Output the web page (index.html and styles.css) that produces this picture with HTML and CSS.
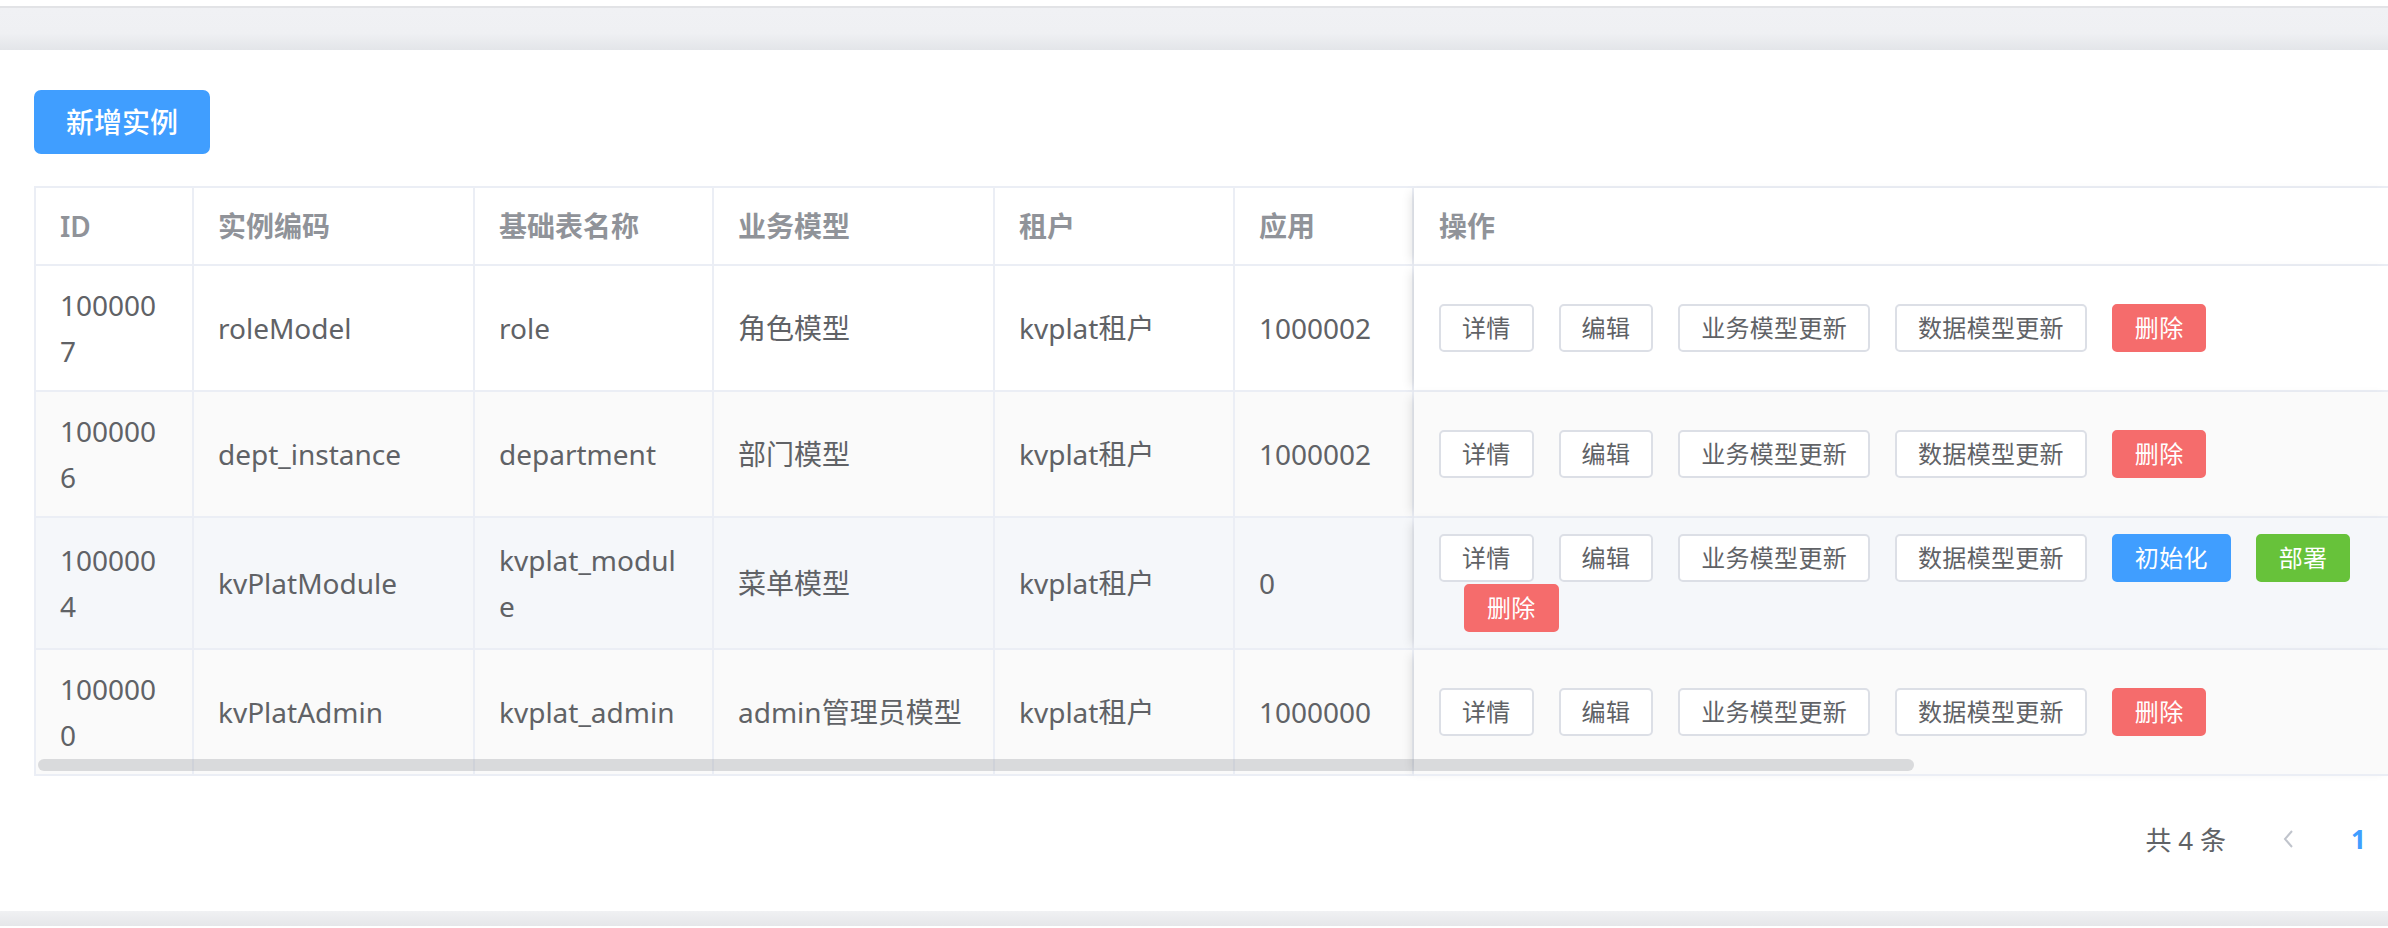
FILE: index.html
```html
<!DOCTYPE html>
<html lang="zh-CN">
<head>
  <meta charset="UTF-8">
  <meta name="viewport" content="width=device-width, initial-scale=1.0">
  <title>实例管理</title>
  <link rel="stylesheet" href="styles.css">
</head>
<body>
  <div class="page">
    <div class="top-band"></div>

    <div class="content">
      <div class="toolbar">
        <button class="btn btn-primary btn-add">新增实例</button>
      </div>

      <div class="table-wrap">
        <table class="data-table">
          <colgroup>
            <col class="c-id">
            <col class="c-code">
            <col class="c-base">
            <col class="c-model">
            <col class="c-tenant">
            <col class="c-app">
            <col>
          </colgroup>
          <thead>
            <tr>
              <th>ID</th>
              <th>实例编码</th>
              <th>基础表名称</th>
              <th>业务模型</th>
              <th>租户</th>
              <th>应用</th>
              <th class="fixed">操作</th>
            </tr>
          </thead>
          <tbody>
            <tr>
              <td>1000007</td>
              <td>roleModel</td>
              <td>role</td>
              <td>角色模型</td>
              <td>kvplat租户</td>
              <td>1000002</td>
              <td class="fixed">
                <div class="ops">
                  <button class="btn btn-mini">详情</button>
                  <button class="btn btn-mini">编辑</button>
                  <button class="btn btn-mini">业务模型更新</button>
                  <button class="btn btn-mini">数据模型更新</button>
                  <button class="btn btn-mini btn-danger">删除</button>
                </div>
              </td>
            </tr>
            <tr class="striped">
              <td>1000006</td>
              <td>dept_instance</td>
              <td>department</td>
              <td>部门模型</td>
              <td>kvplat租户</td>
              <td>1000002</td>
              <td class="fixed">
                <div class="ops">
                  <button class="btn btn-mini">详情</button>
                  <button class="btn btn-mini">编辑</button>
                  <button class="btn btn-mini">业务模型更新</button>
                  <button class="btn btn-mini">数据模型更新</button>
                  <button class="btn btn-mini btn-danger">删除</button>
                </div>
              </td>
            </tr>
            <tr class="hover">
              <td>1000004</td>
              <td>kvPlatModule</td>
              <td>kvplat_module</td>
              <td>菜单模型</td>
              <td>kvplat租户</td>
              <td>0</td>
              <td class="fixed">
                <div class="ops">
                  <button class="btn btn-mini">详情</button>
                  <button class="btn btn-mini">编辑</button>
                  <button class="btn btn-mini">业务模型更新</button>
                  <button class="btn btn-mini">数据模型更新</button>
                  <button class="btn btn-mini btn-primary">初始化</button>
                  <button class="btn btn-mini btn-success">部署</button>
                  <button class="btn btn-mini btn-danger">删除</button>
                </div>
              </td>
            </tr>
            <tr class="striped">
              <td>1000000</td>
              <td>kvPlatAdmin</td>
              <td>kvplat_admin</td>
              <td>admin管理员模型</td>
              <td>kvplat租户</td>
              <td>1000000</td>
              <td class="fixed">
                <div class="ops">
                  <button class="btn btn-mini">详情</button>
                  <button class="btn btn-mini">编辑</button>
                  <button class="btn btn-mini">业务模型更新</button>
                  <button class="btn btn-mini">数据模型更新</button>
                  <button class="btn btn-mini btn-danger">删除</button>
                </div>
              </td>
            </tr>
          </tbody>
        </table>
        <div class="scrollbar"></div>
      </div>

      <div class="pagination">
        <span class="total">共 4 条</span>
        <button class="page-prev" disabled>
          <svg width="12" height="20" viewBox="0 0 12 20"><polyline points="10,2 3,10 10,18" fill="none" stroke="#c0c4cc" stroke-width="2"/></svg>
        </button>
        <span class="page-num active">1</span>
      </div>
    </div>

    <div class="bottom-band"></div>
  </div>
</body>
</html>
```

FILE: styles.css
```css
* { box-sizing: border-box; }
html, body {
  margin: 0;
  overflow: hidden;
  background: #fff;
}
body {
  font-family: "Noto Sans", "Noto Sans CJK SC", sans-serif;
  color: #606266;
}
.page {
  width: 2428px;
}
.top-band {
  margin-top: 6px;
  height: 44px;
  border-top: 2px solid #e2e3e6;
  background: linear-gradient(#f0f1f4 0%, #eff0f3 60%, #e3e5e9 100%);
}
.content {
  padding: 40px 34px 44px 34px;
}
.bottom-band {
  height: 15px;
  background: linear-gradient(#f0f1f3, #e5e6e9);
}

/* buttons */
.btn {
  font-family: inherit;
  display: inline-block;
  line-height: 1;
  border: 2px solid #dcdfe6;
  background: #fff;
  color: #606266;
  cursor: pointer;
  white-space: nowrap;
}
.btn-add {
  font-size: 28px;
  font-weight: 500;
  padding: 16px 30px;
  border-radius: 7px;
}
.btn-mini {
  font-size: 24px;
  letter-spacing: 0.3px;
  padding: 10px 21px;
  border-radius: 5px;
}
.btn-primary { background: #409eff; border-color: #409eff; color: #fff; }
.btn-success { background: #67c23a; border-color: #67c23a; color: #fff; }
.btn-danger { background: #f56c6c; border-color: #f56c6c; color: #fff; }

.toolbar {
  margin-bottom: 32px;
}

/* table */
.table-wrap {
  position: relative;
}
.data-table {
  width: 2360px;
  table-layout: fixed;
  border-collapse: separate;
  border-spacing: 0;
  border-top: 2px solid #ebeef5;
  border-left: 2px solid #ebeef5;
  font-size: 28px;
}
.c-id { width: 158px; }
.c-code { width: 281px; }
.c-base { width: 239px; }
.c-model { width: 281px; }
.c-tenant { width: 240px; }
.c-app { width: 179px; }
.data-table th,
.data-table td {
  text-align: left;
  line-height: 46px;
  padding: 15px 24px;
  border-right: 2px solid #ebeef5;
  border-bottom: 2px solid #ebeef5;
  word-break: break-all;
  vertical-align: middle;
  background: #fff;
}
.data-table th {
  color: #909399;
  font-weight: 600;
}
.data-table td {
  padding: 16px 24px;
}
.data-table th.fixed,
.data-table td.fixed {
  padding-left: 25px;
  box-shadow: -7px 0 10px -5px rgba(0, 0, 0, 0.13);
}
.data-table tr.striped td { background: #fafafa; }
.data-table tr.hover td { background: #f5f7fa; }

.ops {
  display: flex;
  flex-wrap: wrap;
  row-gap: 2px;
}
.ops .btn + .btn {
  margin-left: 25px;
}

.scrollbar {
  position: absolute;
  left: 4px;
  bottom: 5px;
  width: 1876px;
  height: 12px;
  border-radius: 6px;
  background: rgba(144, 147, 153, 0.3);
}

/* pagination */
.pagination {
  margin-top: 35px;
  height: 56px;
  display: flex;
  justify-content: flex-end;
  align-items: center;
  font-size: 26px;
}
.total {
  margin-right: 26px;
  color: #606266;
}
.page-prev {
  width: 71px;
  height: 56px;
  border: none;
  background: #fff;
  display: flex;
  align-items: center;
  justify-content: center;
  padding: 0;
}
.page-num {
  width: 71px;
  text-align: center;
  line-height: 56px;
  font-weight: 700;
}
.page-num.active {
  color: #409eff;
}
```
